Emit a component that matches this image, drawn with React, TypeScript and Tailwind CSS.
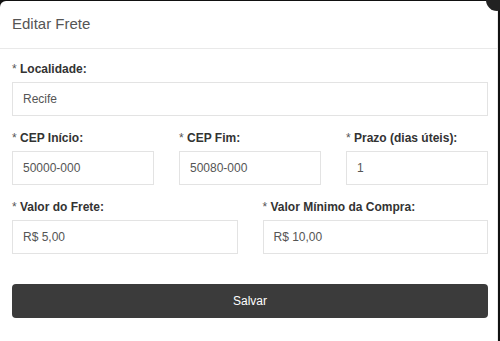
import React from "react"

const Field = ({ label, value }: { label: string; value: string }) => (
  <div className="flex flex-col">
    <label className="text-[12px] leading-[14px] text-[#333] mb-[6px]">
      <span className="font-normal text-[#555]">* </span>
      <span className="font-bold">{label}</span>
    </label>
    <div className="h-[34px] border border-[#e3e3e3] flex items-center px-[10px] text-[12px] text-[#555]">
      {value}
    </div>
  </div>
)

export default function App() {
  return (
    <div
      className="relative w-[500px] h-[341px] overflow-hidden bg-[#111]"
      style={{ fontFamily: '"Liberation Sans", Arial, sans-serif' }}
    >
      {/* Modal */}
      <div className="mt-px w-[498px] h-[340px] bg-white rounded-tl-[6px] border-r border-[#eaeaea]">
        {/* Header */}
        <div className="h-[48px] border-b border-[#e9e9e9] flex items-center px-[12px]">
          <h1 className="text-[15px] text-[#555] font-normal">Editar Frete</h1>
        </div>

        {/* Body */}
        <div className="ml-[12px] pt-[13px] flex flex-col w-[476px]">
          <Field label="Localidade:" value="Recife" />

          <div className="grid grid-cols-3 gap-[25px] mt-[15px]">
            <Field label="CEP Início:" value="50000-000" />
            <Field label="CEP Fim:" value="50080-000" />
            <Field label="Prazo (dias úteis):" value="1" />
          </div>

          <div className="grid grid-cols-2 gap-[25px] mt-[15px]">
            <Field label="Valor do Frete:" value="R$ 5,00" />
            <Field label="Valor Mínimo da Compra:" value="R$ 10,00" />
          </div>

          <button className="mt-[30px] h-[34px] w-full rounded-[4px] bg-[#3b3b3b] text-white text-[12px]">
            Salvar
          </button>
        </div>
      </div>

      {/* Close button peeking */}
      <div className="absolute -top-[11px] -right-[8px] w-[22px] h-[22px] rounded-full bg-[#222]" />
    </div>
  )
}
